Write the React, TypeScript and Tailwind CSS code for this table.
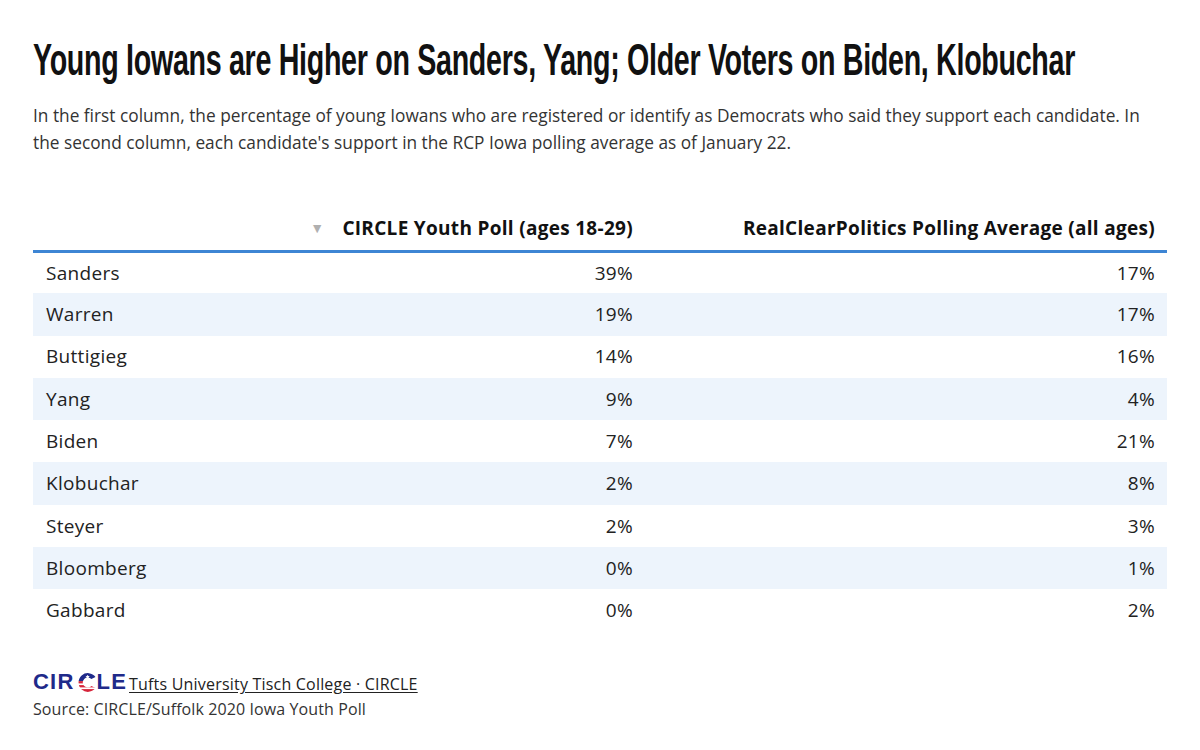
import React from 'react';

// Poll comparison table: CIRCLE youth poll vs. RCP average
const ROWS = [
  { name: 'Sanders', youth: '39%', rcp: '17%' },
  { name: 'Warren', youth: '19%', rcp: '17%' },
  { name: 'Buttigieg', youth: '14%', rcp: '16%' },
  { name: 'Yang', youth: '9%', rcp: '4%' },
  { name: 'Biden', youth: '7%', rcp: '21%' },
  { name: 'Klobuchar', youth: '2%', rcp: '8%' },
  { name: 'Steyer', youth: '2%', rcp: '3%' },
  { name: 'Bloomberg', youth: '0%', rcp: '1%' },
  { name: 'Gabbard', youth: '0%', rcp: '2%' },
];

function FlagC() {
  /* the "C" in the logo: navy cap with a star, red/white stripes below */
  return (
    <svg width="22" height="21" viewBox="0 0 22 20">
      <defs>
        <clipPath id="cshape">
          <path d="M20.5 4.4 A9.4 9.4 0 1 0 20.5 15.6 L16.4 13.4 A5 5 0 1 1 16.4 6.6 Z" />
        </clipPath>
      </defs>
      <g clipPath="url(#cshape)">
        <rect x="0" y="0" width="22" height="20" fill="#fff" />
        <rect x="0" y="0" width="22" height="8.6" fill="#1f2a8a" />
        <rect x="0" y="8.6" width="22" height="2.3" fill="#d6253a" />
        <rect x="0" y="12.6" width="22" height="2.3" fill="#d6253a" />
        <rect x="0" y="16.6" width="22" height="3.4" fill="#d6253a" />
      </g>
      <path d="M12.6 2.2 l0.7 1.4 1.5 0.1 -1.2 1 0.4 1.5 -1.4-0.8 -1.3 0.8 0.4-1.5 -1.2-1 1.5-0.1 z" fill="#fff" />
    </svg>
  );
}

export default function App() {
  return (
    <div
      className="w-[1200px] h-[750px] overflow-hidden bg-white px-[33px] pt-[34px] text-[#222]"
      style={{ fontFamily: '"Open Sans", Lato, sans-serif' }}
    >
      <h1
        className="origin-left scale-x-[0.637] text-[45px] leading-[52px] font-bold text-[#111] tracking-[-0.5px] whitespace-nowrap"
        style={{ fontFamily: '"Liberation Sans", Arial, sans-serif' }}
      >
        Young Iowans are Higher on Sanders, Yang; Older Voters on Biden, Klobuchar
      </h1>

      <p className="mt-[16px] text-[17.3px] leading-[27px] text-[#333] pr-[20px]">
        In the first column, the percentage of young Iowans who are registered or identify as Democrats who said they
        support each candidate. In the second column, each candidate's support in the RCP Iowa polling average as of
        January 22.
      </p>

      <table className="mt-[50px] w-[1134px] border-collapse text-[19px] tracking-[0.3px]">
        <thead>
          <tr className="border-b-[3px] border-[#3d85d4]">
            <th />
            <th className="h-[45px] text-right font-bold text-[#111] align-middle whitespace-nowrap">
              <span className="mr-[18px] text-[14px] text-[#b0b0b0] align-[2px]">▼</span>
              CIRCLE Youth Poll (ages 18-29)
            </th>
            <th className="w-[534px] pr-[12px] text-right font-bold text-[#111] align-middle whitespace-nowrap">
              RealClearPolitics Polling Average (all ages)
            </th>
          </tr>
        </thead>
        <tbody>
          {ROWS.map((r, i) => (
            <tr key={r.name} className={i % 2 === 1 ? 'bg-[#edf4fc]' : 'bg-white'}>
              <td className="h-[42.3px] pl-[13px] text-left text-[#222]">{r.name}</td>
              <td className="text-right text-[#222]">{r.youth}</td>
              <td className="pr-[12px] text-right text-[#222]">{r.rcp}</td>
            </tr>
          ))}
        </tbody>
      </table>

      <div className="mt-[40px] flex items-end gap-[2px]">
        <div
          className="flex items-center text-[22px] font-black leading-[20px] text-[#1f2a8a] tracking-[1.2px]"
          style={{ fontFamily: '"Liberation Sans", Arial, sans-serif' }}
        >
          <span>CIR</span>
          <FlagC />
          <span>LE</span>
        </div>
        <a className="text-[16px] leading-[18px] tracking-[0.2px] text-[#222] underline underline-offset-2">
          Tufts University Tisch College · CIRCLE
        </a>
      </div>
      <div className="mt-[5px] text-[16px] leading-[22px] tracking-[0.1px] text-[#333]">
        Source: CIRCLE/Suffolk 2020 Iowa Youth Poll
      </div>
    </div>
  );
}
